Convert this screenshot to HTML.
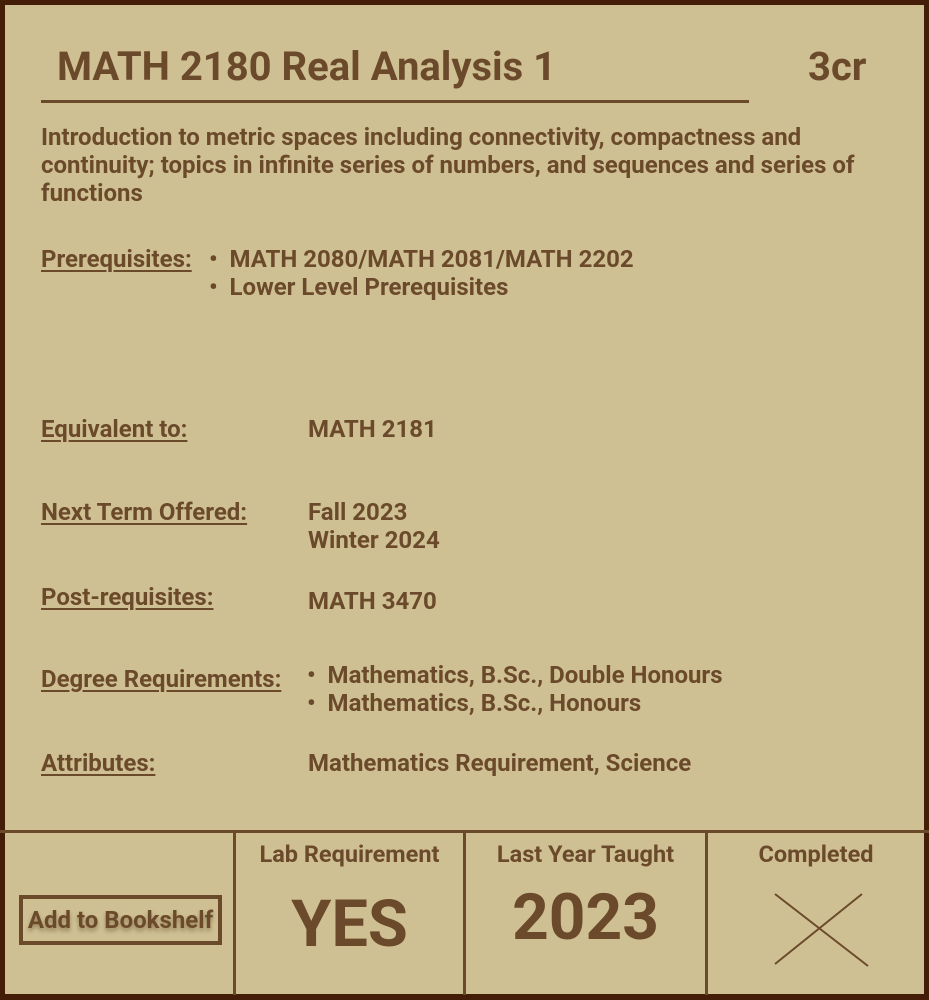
<!DOCTYPE html>
<html><head><meta charset="utf-8"><style>
*{margin:0;padding:0;box-sizing:border-box}
body{width:929px;height:1000px;background:#cfc094;font-family:"Roboto","Liberation Sans",sans-serif;font-weight:bold;color:#6b4a2b;position:relative;overflow:hidden}
.frame{position:absolute;left:0;top:0;width:929px;height:1000px;border:5px solid #431d08;border-bottom-width:6px}
.a{position:absolute;white-space:nowrap}
.t{font-size:24px;line-height:28px}
.lbl{text-decoration:underline;text-underline-offset:3px;text-decoration-thickness:2px}
.vl{position:absolute;top:832px;width:3px;height:163px;background:#6b4a2b}
</style></head><body>
<div class="frame"></div>
<div class="a" style="left:57px;top:44px;font-size:40px;line-height:46px">MATH 2180 Real Analysis 1</div>
<div class="a" style="left:808px;top:44px;font-size:40px;line-height:46px">3cr</div>
<div class="a" style="left:41px;top:100px;width:708px;height:3px;background:#6b4a2b"></div>
<div class="a t" style="left:41px;top:123px;white-space:normal;width:840px">Introduction to metric spaces including connectivity, compactness and continuity; topics in infinite series of numbers, and sequences and series of functions</div>
<div class="a t lbl" style="left:41px;top:245px">Prerequisites:</div>
<div class="a t" style="left:209px;top:245px">•&nbsp; MATH 2080/MATH 2081/MATH 2202<br>•&nbsp; Lower Level Prerequisites</div>
<div class="a t lbl" style="left:41px;top:415px">Equivalent to:</div>
<div class="a t" style="left:308px;top:415px">MATH 2181</div>
<div class="a t lbl" style="left:41px;top:498px">Next Term Offered:</div>
<div class="a t" style="left:308px;top:498px">Fall 2023<br>Winter 2024</div>
<div class="a t lbl" style="left:41px;top:583px">Post-requisites:</div>
<div class="a t" style="left:308px;top:587px">MATH 3470</div>
<div class="a t lbl" style="left:41px;top:665px">Degree Requirements:</div>
<div class="a t" style="left:307px;top:661px">•&nbsp; Mathematics, B.Sc., Double Honours<br>•&nbsp; Mathematics, B.Sc., Honours</div>
<div class="a t lbl" style="left:41px;top:749px">Attributes:</div>
<div class="a t" style="left:308px;top:749px">Mathematics Requirement, Science</div>
<div class="a" style="left:0;top:830px;width:929px;height:3px;background:#6b4a2b"></div>
<div class="vl" style="left:233px"></div>
<div class="vl" style="left:463px"></div>
<div class="vl" style="left:705px"></div>
<div class="a" style="left:19px;top:895px;width:203px;height:50px;border:4px solid #6b4a2b"></div>
<div class="a" style="left:19px;top:906px;width:203px;text-align:center;font-size:24px;line-height:28px;text-shadow:0 3px 4px rgba(80,50,20,0.45)">Add to Bookshelf</div>
<div class="a" style="left:236px;top:840px;width:227px;text-align:center;font-size:23.5px;line-height:28px">Lab Requirement</div>
<div class="a" style="left:236px;top:886px;width:227px;text-align:center;font-size:65px;line-height:76px">YES</div>
<div class="a" style="left:466px;top:880px;width:239px;text-align:center;font-size:64px;line-height:76px">2023</div>
<div class="a" style="left:466px;top:840px;width:239px;text-align:center;font-size:23.5px;line-height:28px">Last Year Taught</div>
<div class="a" style="left:708px;top:840px;width:216px;text-align:center;font-size:23.5px;line-height:28px">Completed</div>
<svg class="a" style="left:770px;top:890px" width="104" height="80"><path d="M5 4 L98 76 M92 4 L5 74" stroke="#6b4a2b" stroke-width="2" fill="none"/></svg>
</body></html>
